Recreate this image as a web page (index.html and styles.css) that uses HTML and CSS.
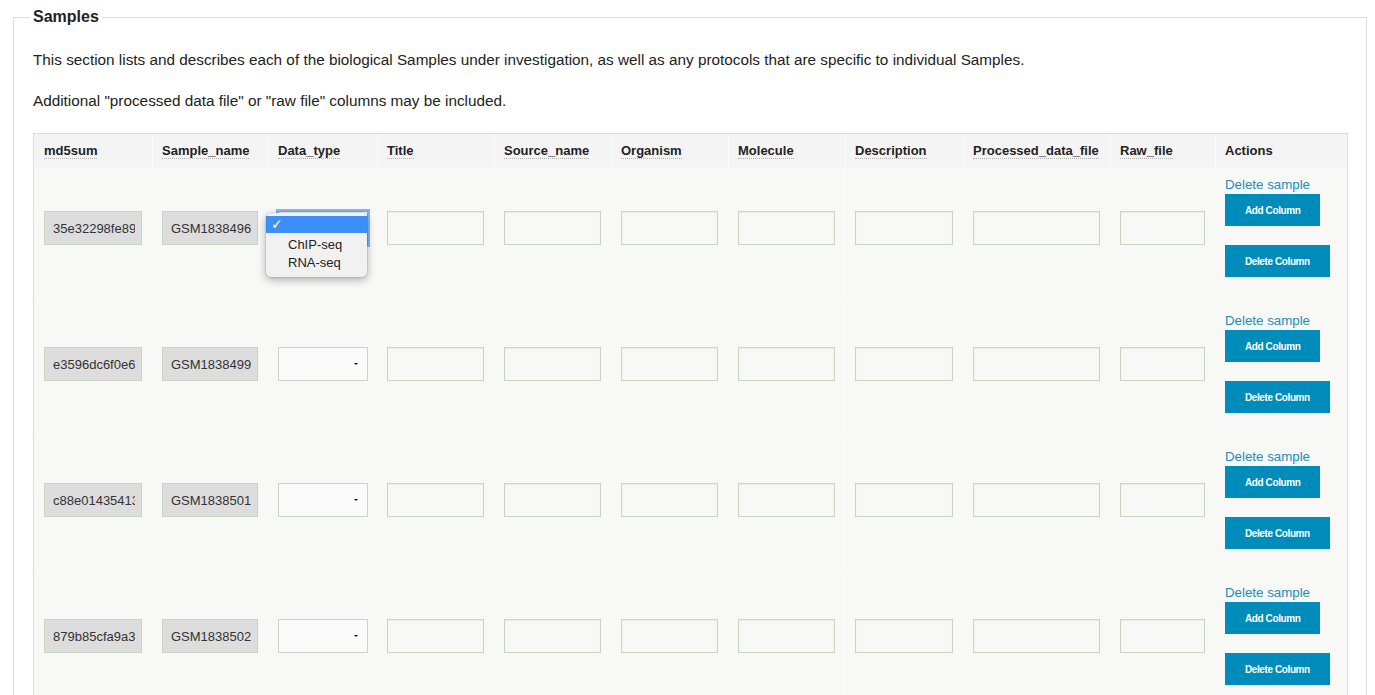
FILE: index.html
```html
<!DOCTYPE html>
<html>
<head>
<meta charset="utf-8">
<title>Samples</title>
<link rel="stylesheet" href="styles.css">
</head>
<body>
<fieldset class="panel">
  <legend class="legend">Samples</legend>
  <p class="intro">This section lists and describes each of the biological Samples under investigation, as well as any protocols that are specific to individual Samples.</p>
  <p class="intro">Additional "processed data file" or "raw file" columns may be included.</p>
  <table class="samples">
    <thead>
      <tr>
        <th class="c-md5"><abbr>md5sum</abbr></th>
        <th class="c-name"><abbr>Sample_name</abbr></th>
        <th class="c-type"><abbr>Data_type</abbr></th>
        <th class="c-std"><abbr>Title</abbr></th>
        <th class="c-std"><abbr>Source_name</abbr></th>
        <th class="c-std"><abbr>Organism</abbr></th>
        <th class="c-std"><abbr>Molecule</abbr></th>
        <th class="c-desc"><abbr>Description</abbr></th>
        <th class="c-proc"><abbr>Processed_data_file</abbr></th>
        <th class="c-raw"><abbr>Raw_file</abbr></th>
        <th class="c-act">Actions</th>
      </tr>
    </thead>
    <tbody>
      <tr>
        <td><input class="field ro" type="text" readonly value="35e32298fe89c1a0"></td>
        <td><input class="field ro" type="text" readonly value="GSM1838496"></td>
        <td>
          <div class="select-wrap focused">
            <select class="picker"><option></option><option>ChIP-seq</option><option>RNA-seq</option></select>
            <div class="popup">
              <div class="popup-item active"><span class="check">✓</span></div>
              <div class="popup-item">ChIP-seq</div>
              <div class="popup-item">RNA-seq</div>
            </div>
          </div>
        </td>
        <td><input class="field" type="text"></td>
        <td><input class="field" type="text"></td>
        <td><input class="field" type="text"></td>
        <td><input class="field" type="text"></td>
        <td><input class="field" type="text"></td>
        <td><input class="field" type="text"></td>
        <td><input class="field" type="text"></td>
        <td class="actions">
          <a class="del-link" href="#">Delete sample</a>
          <button class="btn">Add Column</button>
          <button class="btn">Delete Column</button>
        </td>
      </tr>
      <tr>
        <td><input class="field ro" type="text" readonly value="e3596dc6f0e6b2c4"></td>
        <td><input class="field ro" type="text" readonly value="GSM1838499"></td>
        <td><div class="select-wrap"><select class="picker"><option></option><option>ChIP-seq</option><option>RNA-seq</option></select></div></td>
        <td><input class="field" type="text"></td>
        <td><input class="field" type="text"></td>
        <td><input class="field" type="text"></td>
        <td><input class="field" type="text"></td>
        <td><input class="field" type="text"></td>
        <td><input class="field" type="text"></td>
        <td><input class="field" type="text"></td>
        <td class="actions">
          <a class="del-link" href="#">Delete sample</a>
          <button class="btn">Add Column</button>
          <button class="btn">Delete Column</button>
        </td>
      </tr>
      <tr>
        <td><input class="field ro" type="text" readonly value="c88e01435413d7e9"></td>
        <td><input class="field ro" type="text" readonly value="GSM1838501"></td>
        <td><div class="select-wrap"><select class="picker"><option></option><option>ChIP-seq</option><option>RNA-seq</option></select></div></td>
        <td><input class="field" type="text"></td>
        <td><input class="field" type="text"></td>
        <td><input class="field" type="text"></td>
        <td><input class="field" type="text"></td>
        <td><input class="field" type="text"></td>
        <td><input class="field" type="text"></td>
        <td><input class="field" type="text"></td>
        <td class="actions">
          <a class="del-link" href="#">Delete sample</a>
          <button class="btn">Add Column</button>
          <button class="btn">Delete Column</button>
        </td>
      </tr>
      <tr>
        <td><input class="field ro" type="text" readonly value="879b85cfa9a3e512"></td>
        <td><input class="field ro" type="text" readonly value="GSM1838502"></td>
        <td><div class="select-wrap"><select class="picker"><option></option><option>ChIP-seq</option><option>RNA-seq</option></select></div></td>
        <td><input class="field" type="text"></td>
        <td><input class="field" type="text"></td>
        <td><input class="field" type="text"></td>
        <td><input class="field" type="text"></td>
        <td><input class="field" type="text"></td>
        <td><input class="field" type="text"></td>
        <td><input class="field" type="text"></td>
        <td class="actions">
          <a class="del-link" href="#">Delete sample</a>
          <button class="btn">Add Column</button>
          <button class="btn">Delete Column</button>
        </td>
      </tr>
    </tbody>
  </table>
</fieldset>
</body>
</html>
```

FILE: styles.css
```css
html, body {
  margin: 0;
  padding: 0;
  background: #ffffff;
}

body {
  font-family: "Liberation Sans", Arial, sans-serif;
  color: #222222;
}

.panel {
  margin: 8px 8px 0 13px;
  padding: 0 19px 20px 19px;
  border: 1px solid #dddddd;
  min-width: 0;
}

.legend {
  font-weight: bold;
  font-size: 16px;
  padding: 0 3px;
  margin-left: -3px;
  color: #222222;
}

.intro {
  font-size: 15.3px;
  line-height: 20px;
  margin: 24px 0 0 0;
}

.intro + .intro {
  margin-top: 21px;
}

.samples {
  margin-top: 22px;
  width: 1315px;
  table-layout: fixed;
  border-collapse: separate;
  border-spacing: 0;
  border: 1px solid #dddddd;
  background: #f8f8f6;
}

.samples th,
.samples td {
  box-sizing: border-box;
  border-right: 1px solid #fbfbfa;
  text-align: left;
}

.samples th:last-child,
.samples td:last-child {
  border-right: none;
}

.samples th {
  background: #f4f4f4;
  height: 33px;
  padding: 0 10px 0 9px;
  font-size: 13px;
  font-weight: bold;
  color: #222222;
  vertical-align: middle;
}

.samples th:first-child {
  padding-left: 10px;
}

.samples abbr {
  text-decoration: none;
  border-bottom: 1px dotted #b0b0b0;
}

.c-md5 { width: 119px; }
.c-name { width: 116px; }
.c-type { width: 109px; }
.c-std { width: 117px; }
.c-desc { width: 118px; }
.c-proc { width: 147px; }
.c-raw { width: 105px; }
.c-act { width: 131px; }

.samples td {
  padding: 9px 10px 6px 9px;
  vertical-align: middle;
  border-top: 1px solid #fafaf9;
}

.samples td:first-child {
  padding-left: 10px;
}

.samples tbody tr:first-child td {
  border-top: none;
}

.field {
  display: block;
  box-sizing: border-box;
  width: 100%;
  height: 34px;
  margin: 0 0 16px 0;
  padding: 0 6px 0 8px;
  border: 1px solid #cbd4c1;
  background: #f8f8f6;
  box-shadow: inset 0 1px 2px rgba(0, 0, 0, 0.06);
  font-family: "Liberation Sans", Arial, sans-serif;
  font-size: 13px;
  color: #333333;
  outline: none;
}

.field.ro {
  background: #dddddd;
  box-shadow: none;
}

.select-wrap {
  position: relative;
  width: 90px;
  margin: 0 0 16px 0;
}

.select-wrap::after {
  content: "";
  position: absolute;
  right: 10px;
  top: 16px;
  border-left: 2px solid transparent;
  border-right: 2px solid transparent;
  border-top: 2px solid #111111;
}

.picker {
  display: block;
  box-sizing: border-box;
  width: 90px;
  height: 34px;
  margin: 0;
  padding: 0 8px;
  border: 1px solid #cbd4c1;
  border-radius: 0;
  background: #fafafa;
  -webkit-appearance: none;
  appearance: none;
  font-family: "Liberation Sans", Arial, sans-serif;
  font-size: 13px;
  color: #333333;
  outline: none;
}

.focused .picker {
  border-color: #7aa7dc;
  box-shadow: 0 0 0 2px #8ab6ea;
}

.popup {
  position: absolute;
  left: -12px;
  top: 2px;
  width: 101px;
  box-sizing: border-box;
  padding: 3px 0 5px 0;
  background: #f1f1f1;
  border-radius: 5px;
  box-shadow: 0 3px 9px rgba(0, 0, 0, 0.3), 0 0 0 1px rgba(0, 0, 0, 0.08);
  z-index: 5;
}

.popup-item {
  height: 18px;
  line-height: 18px;
  padding-left: 22px;
  font-size: 13px;
  color: #222222;
}

.popup-item.active {
  background: #3b8ff6;
  height: 17px;
  line-height: 17px;
  margin-bottom: 3px;
  position: relative;
}

.check {
  position: absolute;
  left: 5px;
  top: 0;
  color: #ffffff;
  font-family: "DejaVu Sans", sans-serif;
  font-size: 14px;
  font-weight: bold;
}

.actions {
  white-space: nowrap;
}

.del-link {
  display: block;
  height: 18px;
  line-height: 18px;
  font-size: 13.3px;
  color: #1b8dbf;
  text-decoration: none;
}

.btn {
  display: block;
  height: 32px;
  margin: 0 0 19px 0;
  padding: 0 20px;
  border: none;
  border-radius: 0;
  background: #008cba;
  color: #ffffff;
  font-family: "Liberation Sans", Arial, sans-serif;
  font-size: 10px;
  letter-spacing: -0.4px;
  font-weight: bold;
  cursor: pointer;
}
```
